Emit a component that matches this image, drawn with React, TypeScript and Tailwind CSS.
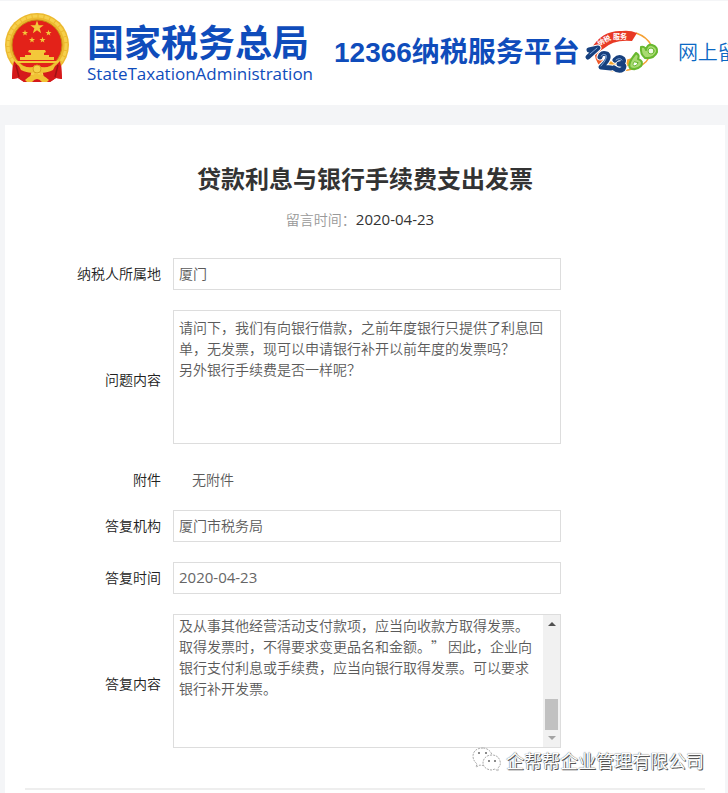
import React from 'react';

const ANSWER =
  '及从事其他经营活动支付款项，应当向收款方取得发票。取得发票时，不得要求变更品名和金额。” 因此，企业向银行支付利息或手续费，应当向银行取得发票。可以要求银行补开发票。';

const QUESTION =
  '请问下，我们有向银行借款，之前年度银行只提供了利息回单，无发票，现可以申请银行补开以前年度的发票吗？\n另外银行手续费是否一样呢？';

const star = (cx: number, cy: number, r: number) =>
  Array.from({ length: 10 }, (_, i) => {
    const a = (Math.PI * i) / 5 - Math.PI / 2;
    const d = i % 2 ? r * 0.4 : r;
    return `${cx + d * Math.cos(a)},${cy + d * Math.sin(a)}`;
  }).join(' ');

function Emblem() {
  return (
    <svg viewBox="0 0 66 70" className="w-[66px] h-[70px] shrink-0" aria-hidden="true">
      <path d="M9 48 L57 48 L58 66 L52 65 L46 69 H20 L14 65 L8 66Z" fill="#d5191b" />
      <circle cx="33" cy="32" r="32" fill="#ecb92f" />
      <circle cx="33" cy="32" r="29" fill="none" stroke="#f6d04c" strokeWidth="3" strokeDasharray="5 1" />
      <circle cx="33" cy="32" r="25" fill="#e32219" stroke="#c98a14" strokeWidth="1" />
      <g fill="#f3c83a">
        <polygon points={star(33, 14.5, 7)} />
        <polygon points={star(21, 20, 3.2)} />
        <polygon points={star(44.5, 20, 3.2)} />
        <polygon points={star(28, 27, 3.2)} />
        <polygon points={star(38.5, 27, 3.2)} />
        <path d="M25 37 h16 l1 2 -2 1 v2 h5 v2 h5 v3 H16 v-3 h5 v-2 h6 v-2 l-3 -1z" />
        <path d="M11 48 H55 V50 H11z" />
      </g>
      <path d="M10 48 Q18 58 28 56 L25 69 H20 L14 65 L8 66 L9 53Z" fill="#d5191b" />
      <path d="M56 48 Q48 58 38 56 L41 69 H46 L52 65 L58 66 L57 53Z" fill="#d5191b" />
      <path d="M12 52 L15 64 M54 52 L51 64" fill="none" stroke="#a01214" strokeWidth="1.5" />
      <path d="M13 49 Q22 57 33 53 Q44 57 53 49 L49 57 Q40 61 36 59 Q33 61 30 59 Q26 61 17 57Z" fill="#f0c234" />
      <circle cx="33" cy="56" r="4" fill="#f5d24a" stroke="#d9a11f" />
      <path d="M21 67 Q33 55 45 67 L43 69 H38 Q33 63 28 69 H23Z" fill="#f0c234" />
    </svg>
  );
}

function HotlineLogo() {
  return (
    <svg viewBox="0 0 76 44" className="w-[76px] h-[44px] shrink-0" aria-hidden="true">
      <path d="M52 4 Q63 8 67 16 M66 27 Q60 39 44 41 Q26 44 14 37" fill="none" stroke="#f5a033" strokeWidth="1.5" />
      <path d="M7 20 Q18 1 38 2 Q46 1 53 4 L48 12 Q30 10 19 20 L14 23 Q9 24 7 20Z" fill="#e83a25" />
      <path d="M16 16 Q11 24 17 34" fill="none" stroke="#ee5a2a" strokeWidth="6" />
      <path d="M18 36 Q34 43 52 34 L48 29 Q36 34 24 32Z" fill="#f7a62f" />
      <text x="15" y="17" transform="rotate(-28 15 17)" fill="#ffffff" className="text-[7px] font-bold font-['Noto_Sans_CJK_SC',sans-serif]">
        纳税
      </text>
      <text x="29" y="10" fill="#ffffff" className="text-[7px] font-bold font-['Noto_Sans_CJK_SC',sans-serif]">
        服务
      </text>
      <g fill="none" strokeLinecap="round" strokeLinejoin="round">
        <g stroke="#ffffff" strokeWidth="7">
          <path d="M5 21 L14 19 L4 28" />
          <path d="M16 28 Q17 23 23 25 Q27 29 17 38 L27 39" />
          <path d="M31 31 Q35 27 39 30 Q41 34 35 35 Q42 35 39 40 Q35 43 30 39" />
        </g>
        <g stroke="#17407e" strokeWidth="5">
          <path d="M5 21 L14 19 L4 28" />
          <path d="M16 28 Q17 23 23 25 Q27 29 17 38 L27 39" />
          <path d="M31 31 Q35 27 39 30 Q41 34 35 35 Q42 35 39 40 Q35 43 30 39" />
        </g>
        <g stroke="#7ea6d8" strokeWidth="1">
          <path d="M6 25 L13 19" />
          <path d="M17 27 Q19 24 22 26 Q24 29 17 37" />
          <path d="M32 31 Q36 28 38 31" />
        </g>
        <g stroke="#68b82f" strokeWidth="2">
          <path d="M52 24 Q56 26 54 30 Q60 32 57 37 Q52 42 46 39 Q43 35 52 24Z" fill="#a9da72" />
          <path d="M50 33 Q48 36 50 37 Q53 37 54 34 Z" fill="#ffffff" strokeWidth="1" />
          <path d="M57 18 Q61 17 62 21 Q63 15 68 16 Q74 18 73 23 Q70 30 61 29 Q56 25 57 18Z" fill="#a9da72" />
          <circle cx="67" cy="22" r="3" fill="#f2fae8" strokeWidth="1" />
        </g>
      </g>
    </svg>
  );
}

function WechatMark() {
  return (
    <svg viewBox="0 0 30 26" className="w-[30px] h-[26px] shrink-0" fill="#ffffff" stroke="#aaaaaa" strokeWidth="1" strokeDasharray="2 1" aria-hidden="true">
      <path d="M11 1 C4 1 1 5 1 9 C1 13 3 15 5 17 L4 20 L8 18 Q10 19 12 18 C19 18 21 13 20 8 C19 4 15 1 11 1Z" />
      <path d="M20 8 C14 8 11 12 11 16 C11 20 15 23 20 23 L23 22 L26 24 L26 21 C28 19 29 17 28 14 C27 10 24 8 20 8Z" />
      <g fill="#666666" stroke="none">
        <circle cx="7" cy="6" r="1" />
        <circle cx="14" cy="6" r="1" />
        <circle cx="17" cy="14" r="1" />
        <circle cx="23" cy="14" r="1" />
      </g>
    </svg>
  );
}

function Row({ id, label, tall, children }: { id: string; label: string; tall?: boolean; children: React.ReactNode }) {
  return (
    <div className="flex items-center gap-3">
      <label htmlFor={id} className={`w-[156px] shrink-0 text-right text-[#222222] ${tall ? 'pt-1' : 'pb-0.5'}`}>
        {label}
      </label>
      {children}
    </div>
  );
}

const inputClass =
  'w-full max-w-[388px] h-8 px-[5px] pb-0.5 border border-[#dddddd] bg-white text-[#5a5a5a] outline-none';

function App() {
  return (
    <div
      lang="zh-CN"
      className="relative overflow-hidden border-t border-[#f4f5f7] bg-[#f4f5f7] text-sm font-[350] font-['Noto_Sans_CJK_SC',sans-serif]"
    >
      <header className="flex h-26 items-start overflow-hidden bg-white pl-1 whitespace-nowrap text-[#0f4cbb]">
        <div className="flex pt-3">
          <Emblem />
        </div>
        <div className="ml-[17px] w-[230px] shrink-0 pt-5">
          <div className="text-[37px] leading-10 font-bold">国家税务总局</div>
          <div className="mt-[3px] text-[17px] leading-5 font-normal font-['Open_Sans',sans-serif]">StateTaxationAdministration</div>
        </div>
        <h2 className="ml-[17px] shrink-0 pt-8 text-[28px] leading-10 font-bold font-['Liberation_Sans','Noto_Sans_CJK_SC',sans-serif]">
          12366纳税服务平台
        </h2>
        <div className="ml-1 flex pt-7">
          <HotlineLogo />
        </div>
        <a href="#" className="ml-[18px] shrink-0 pt-[35px] text-xl leading-8 text-[#0b68c4]">
          网上留言
        </a>
      </header>

      <main className="mt-5 mr-[3px] ml-[5px] bg-white pt-[35px] pb-1">
        <h1 className="text-center text-2xl leading-9 font-bold text-[#333333]">贷款利息与银行手续费支出发票</h1>
        <p className="mt-[11px] pr-2.5 text-center leading-6 text-[#999999]">
          留言时间：
          <time className="text-[15px] font-normal text-[#333333] font-['Open_Sans',sans-serif]">2020-04-23</time>
        </p>

        <form className="mt-[27px] flex flex-col gap-5">
          <Row id="area" label="纳税人所属地">
            <input id="area" className={inputClass} defaultValue="厦门" readOnly />
          </Row>
          <Row id="question" label="问题内容" tall>
            <textarea
              id="question"
              className="h-[134px] w-full max-w-[388px] resize-none overflow-hidden border border-[#dddddd] px-[5px] pt-[6px] leading-[21px] text-[#5a5a5a] outline-none"
              defaultValue={QUESTION}
              readOnly
            />
          </Row>
          <div className="flex h-8 items-center gap-[31px] pb-0.5">
            <span className="w-[156px] shrink-0 text-right text-[#222222]">附件</span>
            <span className="text-[#5a5a5a]">无附件</span>
          </div>
          <div className="-mt-[6px]">
            <Row id="office" label="答复机构">
              <input id="office" className={inputClass} defaultValue="厦门市税务局" readOnly />
            </Row>
          </div>
          <Row id="date" label="答复时间">
            <input
              id="date"
              className="h-8 w-full max-w-[388px] border border-[#dddddd] bg-white px-[5px] pb-0.5 text-[15px] font-normal text-[#666666] outline-none font-['Open_Sans',sans-serif]"
              defaultValue="2020-04-23"
              readOnly
            />
          </Row>
          <Row id="answer" label="答复内容" tall>
            <div className="flex h-[134px] w-full max-w-[388px] border border-[#dddddd]">
              <textarea
                id="answer"
                className="min-w-0 flex-1 resize-none overflow-hidden pr-1 pl-[5px] leading-[21px] text-[#5a5a5a] outline-none [text-spacing-trim:space-all]"
                defaultValue={ANSWER}
                readOnly
              />
              <div className="flex w-[17px] flex-col items-center bg-[#f1f1f1] py-[7px]" aria-hidden="true">
                <svg viewBox="0 0 8 4" className="h-1 w-2" fill="#505050">
                  <path d="M0 4 L4 0 L8 4Z" />
                </svg>
                <div className="mt-auto mb-[6px] h-[31px] w-[13px] bg-[#c1c1c1]" />
                <svg viewBox="0 0 8 4" className="h-1 w-2" fill="#a3a3a3">
                  <path d="M0 0 L4 4 L8 0Z" />
                </svg>
              </div>
            </div>
          </Row>
        </form>
        <hr className="mx-5 mt-10 border-t-2 border-[#eeeeee]" />
      </main>

      <div className="absolute right-6 bottom-5 flex items-center gap-1 text-lg leading-7 font-normal text-white [text-shadow:1px_1px_0_#555555,0_0_1px_#333333]">
        <WechatMark />
        <span>企帮帮企业管理有限公司</span>
      </div>
    </div>
  );
}

export default App;
